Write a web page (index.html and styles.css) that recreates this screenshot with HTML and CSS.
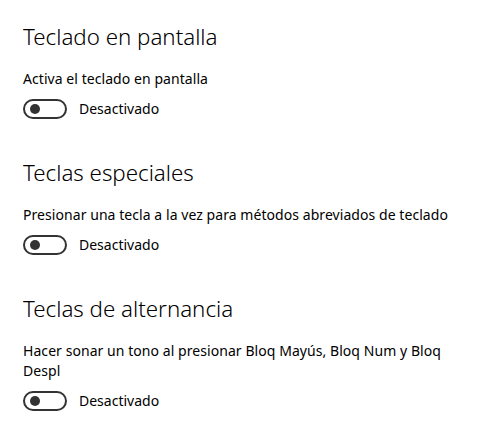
FILE: index.html
```html
<!DOCTYPE html>
<html lang="es">
<head>
<meta charset="utf-8">
<link rel="stylesheet" href="styles.css">
</head>
<body>
<main class="page">
  <section class="group">
    <h2 class="title">Teclado en pantalla</h2>
    <p class="desc">Activa el teclado en pantalla</p>
    <div class="toggle-row">
      <span class="toggle"><span class="knob"></span></span>
      <span class="state">Desactivado</span>
    </div>
  </section>
  <section class="group">
    <h2 class="title">Teclas especiales</h2>
    <p class="desc">Presionar una tecla a la vez para métodos abreviados de teclado</p>
    <div class="toggle-row">
      <span class="toggle"><span class="knob"></span></span>
      <span class="state">Desactivado</span>
    </div>
  </section>
  <section class="group">
    <h2 class="title">Teclas de alternancia</h2>
    <p class="desc">Hacer sonar un tono al presionar Bloq Mayús, Bloq Num y Bloq Despl</p>
    <div class="toggle-row">
      <span class="toggle"><span class="knob"></span></span>
      <span class="state">Desactivado</span>
    </div>
  </section>
</main>
</body>
</html>
```

FILE: styles.css
```css
html, body {
  margin: 0;
  padding: 0;
  background: #ffffff;
}

body {
  font-family: "Noto Sans", "Open Sans", sans-serif;
  color: #000000;
}

.page {
  display: flex;
  flex-direction: column;
  gap: 40px;
  padding: 23px 0 0 23px;
  width: 440px;
}

.group {
  display: flex;
  flex-direction: column;
}

.title {
  margin: 0;
  font-size: 22.3px;
  font-weight: 300;
  line-height: 28px;
  color: #000;
}

.desc {
  margin: 18px 0 0 0;
  font-size: 14px;
  letter-spacing: 0.06px;
  line-height: 20px;
  color: #000;
}

.toggle-row {
  display: flex;
  align-items: center;
  gap: 12px;
  margin-top: 10px;
  height: 20px;
}

.toggle {
  box-sizing: border-box;
  width: 44px;
  height: 20px;
  border: 2px solid #333333;
  border-radius: 10px;
  display: flex;
  align-items: center;
  padding-left: 5px;
}

.knob {
  width: 10px;
  height: 10px;
  border-radius: 50%;
  background: #333333;
}

.state {
  font-size: 14px;
  line-height: 20px;
  color: #000;
}
```
